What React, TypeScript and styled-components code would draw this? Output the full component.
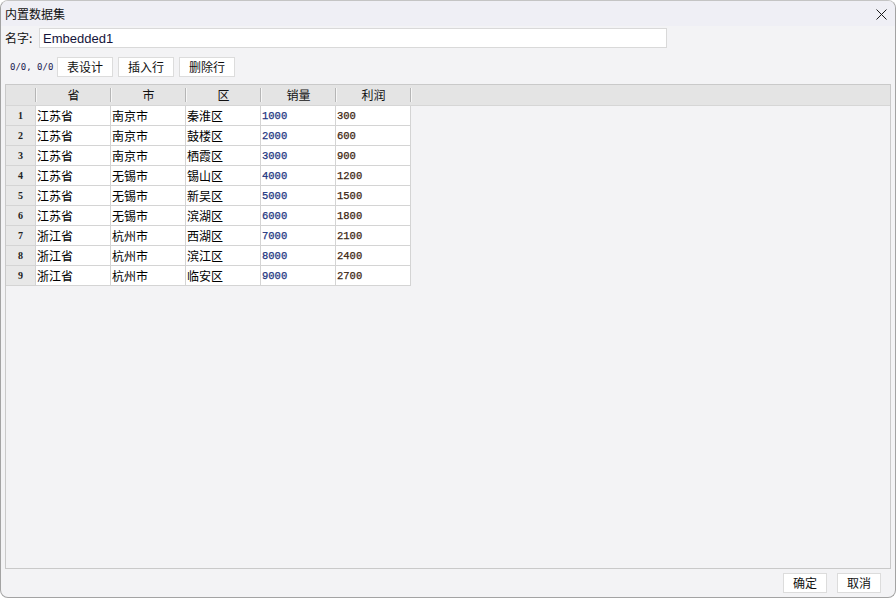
import React from "react";
import styled, { createGlobalStyle } from "styled-components";

const GlobalStyle = createGlobalStyle`
  html, body {
    margin: 0;
    padding: 0;
    background: #ffffff;
  }
  body {
    font-family: "Noto Sans CJK SC", "Noto Sans", sans-serif;
    font-size: 12px;
    color: #000;
  }
`;

const Window = styled.div`
  width: 896px;
  height: 598px;
  box-sizing: border-box;
  border: 1px solid #a3a3a3;
  border-top-color: #c4c4c4;
  border-radius: 8px;
  background: #f3f3f5;
  display: flex;
  flex-direction: column;
  overflow: hidden;
`;

const TitleBar = styled.div`
  height: 25px;
  flex: none;
  background: #efeff5;
  display: flex;
  align-items: center;
  justify-content: space-between;
  padding: 0 8px 0 4px;
`;

const Title = styled.span`
  font-size: 12px;
  line-height: 14px;
  color: #111;
`;

const CloseIcon = styled.div`
  width: 11px;
  height: 11px;
  flex: none;
  display: flex;
  margin-top: 1px;
`;

const Body = styled.div`
  flex: 1;
  display: flex;
  flex-direction: column;
  padding: 0 4px;
`;

const NameRow = styled.div`
  margin-top: 2px;
  height: 20px;
  display: flex;
  align-items: center;
`;

const Label = styled.span`
  width: 34px;
  font-size: 12px;
  line-height: 14px;
  color: #111;
`;

const NameInput = styled.div`
  width: 628px;
  height: 20px;
  box-sizing: border-box;
  border: 1px solid #d9d9d9;
  background: #fff;
  display: flex;
  align-items: center;
  padding-left: 3px;
  font-family: "Liberation Sans", Arial, sans-serif;
  font-size: 13px;
  color: #14143a;
`;

const Toolbar = styled.div`
  margin-top: 9px;
  height: 20px;
  display: flex;
  align-items: center;
  gap: 5px;
`;

const Position = styled.span`
  padding-left: 5px;
  width: 42px;
  font-family: "DejaVu Sans Mono", monospace;
  font-size: 9px;
  color: #1a2050;
  white-space: nowrap;
`;

const Button = styled.button<{ $w: number }>`
  width: ${(p) => p.$w}px;
  height: 20px;
  box-sizing: border-box;
  border: 1px solid #dcdcdc;
  background: #ffffff;
  padding: 0;
  font-family: "Noto Sans CJK SC", sans-serif;
  font-size: 12px;
  line-height: 14px;
  color: #111;
  display: flex;
  align-items: center;
  justify-content: center;
`;

const TableBox = styled.div`
  margin-top: 7px;
  width: 886px;
  height: 485px;
  box-sizing: border-box;
  border: 1px solid #c9c9c9;
  display: flex;
  flex-direction: column;
`;

const HeaderRow = styled.div`
  height: 21px;
  flex: none;
  box-sizing: border-box;
  background: #e4e4e4;
  border-bottom: 1px solid #d6d6d6;
  display: flex;
`;

const HeaderCell = styled.div<{ $w: number }>`
  position: relative;
  width: ${(p) => p.$w}px;
  flex: none;
  display: flex;
  align-items: center;
  justify-content: center;
  font-size: 12px;
  line-height: 14px;
  color: #111;
  &::after {
    content: "";
    position: absolute;
    right: 0;
    top: 3px;
    bottom: 3px;
    width: 1px;
    background: #b5b5b5;
    box-shadow: 1px 0 0 #f6f6f6;
  }
`;

const Row = styled.div`
  height: 20px;
  flex: none;
  display: flex;
`;

const RowHead = styled.div`
  width: 30px;
  flex: none;
  box-sizing: border-box;
  background: #e8e8e8;
  border-right: 1px solid #d4d4d4;
  border-bottom: 1px solid #d4d4d4;
  display: flex;
  align-items: center;
  justify-content: center;
  font-family: "Liberation Serif", serif;
  font-weight: bold;
  font-size: 10px;
  color: #222;
`;

const Cell = styled.div<{ $num?: "a" | "b" }>`
  width: 75px;
  flex: none;
  box-sizing: border-box;
  background: #ffffff;
  border-right: 1px solid #d4d4d4;
  border-bottom: 1px solid #d4d4d4;
  display: flex;
  align-items: center;
  padding-left: 1px;
  padding-top: ${(p) => (p.$num ? 1 : 0)}px;
  font-family: ${(p) =>
    p.$num ? '"Liberation Mono", monospace' : '"Noto Sans CJK SC", sans-serif'};
  font-size: ${(p) => (p.$num ? 10.5 : 12)}px;
  font-weight: normal;
  -webkit-text-stroke: ${(p) => (p.$num ? "0.25px" : "0")};
  line-height: 14px;
  color: ${(p) => (p.$num === "a" ? "#1c3480" : p.$num === "b" ? "#3a2410" : "#000")};
`;

const Footer = styled.div`
  margin-top: 4px;
  display: flex;
  justify-content: flex-end;
  gap: 10px;
  padding-right: 10px;
`;

const data: [string, string, string, string, string][] = [
  ["江苏省", "南京市", "秦淮区", "1000", "300"],
  ["江苏省", "南京市", "鼓楼区", "2000", "600"],
  ["江苏省", "南京市", "栖霞区", "3000", "900"],
  ["江苏省", "无锡市", "锡山区", "4000", "1200"],
  ["江苏省", "无锡市", "新吴区", "5000", "1500"],
  ["江苏省", "无锡市", "滨湖区", "6000", "1800"],
  ["浙江省", "杭州市", "西湖区", "7000", "2100"],
  ["浙江省", "杭州市", "滨江区", "8000", "2400"],
  ["浙江省", "杭州市", "临安区", "9000", "2700"],
];

const headers = ["省", "市", "区", "销量", "利润"];

export default function App() {
  return (
    <>
      <GlobalStyle />
      <Window>
        <TitleBar>
          <Title>内置数据集</Title>
          <CloseIcon aria-label="close">
            <svg width="11" height="11" viewBox="0 0 11 11">
              <path d="M0.5 0.5 L10.5 10.5 M10.5 0.5 L0.5 10.5" stroke="#1a1a1a" strokeWidth="1" fill="none" />
            </svg>
          </CloseIcon>
        </TitleBar>
        <Body>
          <NameRow>
            <Label>名字:</Label>
            <NameInput>Embedded1</NameInput>
          </NameRow>
          <Toolbar>
            <Position>0/0, 0/0</Position>
            <Button $w={56}>表设计</Button>
            <Button $w={56}>插入行</Button>
            <Button $w={56}>删除行</Button>
          </Toolbar>
          <TableBox>
            <HeaderRow>
              <HeaderCell $w={30} />
              {headers.map((h) => (
                <HeaderCell key={h} $w={75}>
                  {h}
                </HeaderCell>
              ))}
            </HeaderRow>
            {data.map((r, i) => (
              <Row key={i}>
                <RowHead>{i + 1}</RowHead>
                <Cell>{r[0]}</Cell>
                <Cell>{r[1]}</Cell>
                <Cell>{r[2]}</Cell>
                <Cell $num="a">{r[3]}</Cell>
                <Cell $num="b">{r[4]}</Cell>
              </Row>
            ))}
          </TableBox>
          <Footer>
            <Button $w={44}>确定</Button>
            <Button $w={44}>取消</Button>
          </Footer>
        </Body>
      </Window>
    </>
  );
}
